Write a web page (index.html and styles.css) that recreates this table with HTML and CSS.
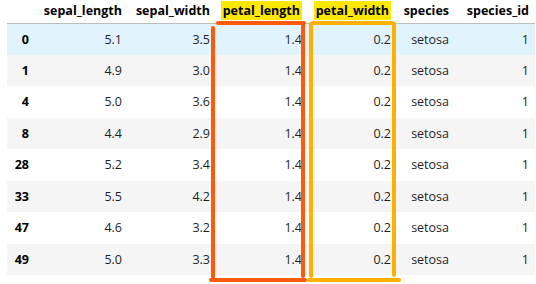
FILE: index.html
```html
<!DOCTYPE html>
<html>
<head>
<meta charset="utf-8">
<link rel="stylesheet" href="styles.css">
</head>
<body>
<div class="frame">
<table class="df">
  <colgroup>
    <col class="c-idx"><col class="c-sl"><col class="c-sw"><col class="c-pl"><col class="c-pw"><col class="c-sp"><col class="c-id">
  </colgroup>
  <thead>
    <tr><th></th><th>sepal_length</th><th>sepal_width</th><th><span class="hl">petal_length</span></th><th><span class="hl">petal_width</span></th><th>species</th><th>species_id</th></tr>
  </thead>
  <tbody>
    <tr class="hover"><th>0</th><td>5.1</td><td>3.5</td><td>1.4</td><td>0.2</td><td>setosa</td><td>1</td></tr>
    <tr><th>1</th><td>4.9</td><td>3.0</td><td>1.4</td><td>0.2</td><td>setosa</td><td>1</td></tr>
    <tr><th>4</th><td>5.0</td><td>3.6</td><td>1.4</td><td>0.2</td><td>setosa</td><td>1</td></tr>
    <tr><th>8</th><td>4.4</td><td>2.9</td><td>1.4</td><td>0.2</td><td>setosa</td><td>1</td></tr>
    <tr><th>28</th><td>5.2</td><td>3.4</td><td>1.4</td><td>0.2</td><td>setosa</td><td>1</td></tr>
    <tr><th>33</th><td>5.5</td><td>4.2</td><td>1.4</td><td>0.2</td><td>setosa</td><td>1</td></tr>
    <tr><th>47</th><td>4.6</td><td>3.2</td><td>1.4</td><td>0.2</td><td>setosa</td><td>1</td></tr>
    <tr><th>49</th><td>5.0</td><td>3.3</td><td>1.4</td><td>0.2</td><td>setosa</td><td>1</td></tr>
  </tbody>
</table>
<div class="ann o-top"></div>
<div class="ann o-left"></div>
<div class="ann o-right"></div>
<div class="ann o-bottom"></div>
<div class="ann y-top"></div>
<div class="ann y-left"></div>
<div class="ann y-right"></div>
<div class="ann y-bottom"></div>
</div>
</body>
</html>
```
FILE: styles.css
```css
html, body { margin: 0; padding: 0; background: #fff; }
.frame { position: relative; width: 536px; height: 284px; overflow: hidden; }
.df {
  margin-left: 7px;
  border-collapse: collapse;
  table-layout: fixed;
  font-family: "Open Sans", "Noto Sans", sans-serif;
  font-size: 12.5px;
  color: #1f1f1f;
}
.c-idx { width: 28px; }
.c-sl { width: 93px; }
.c-sw { width: 88px; }
.c-pl { width: 92px; }
.c-pw { width: 89px; }
.c-sp { width: 58px; }
.c-id { width: 80px; }
.df th, .df td { padding: 0 6px 0 0; text-align: right; white-space: nowrap; }
.df thead tr { height: 23px; }
.df thead th { font-weight: 700; color: #000; border-bottom: 1px solid #bdbdbd; vertical-align: middle; padding-bottom: 2px; }
.df tbody tr { height: 31.5px; }
.df tbody th { font-weight: 700; color: #000; }
.df tbody tr:nth-child(even) { background: #f5f5f5; }
.df tbody tr.hover { background: #e1f3fc; }
.hl { background: #ffe800; padding: 1px 2px; }
.ann { position: absolute; border-radius: 2px; }
.o-top, .o-left, .o-right, .o-bottom { background: #ff5a0a; }
.y-top, .y-left, .y-right, .y-bottom { background: #ffb000; }
.o-top { left: 216px; top: 21px; width: 90px; height: 4px; }
.o-left { left: 211px; top: 26px; width: 4px; height: 253px; }
.o-right { left: 301px; top: 21px; width: 4px; height: 257px; }
.o-bottom { left: 209px; top: 278px; width: 98px; height: 4px; }
.y-top { left: 311px; top: 21px; width: 83px; height: 4px; }
.y-left { left: 309px; top: 22px; width: 4px; height: 256px; }
.y-right { left: 392px; top: 22px; width: 4px; height: 255px; }
.y-bottom { left: 307px; top: 278px; width: 94px; height: 4px; }
```
